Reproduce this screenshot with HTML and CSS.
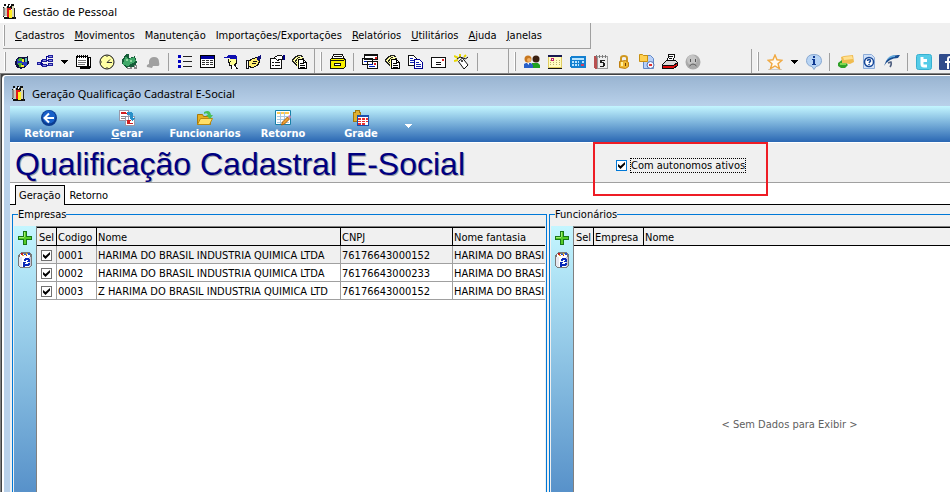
FILE: index.html
```html
<!DOCTYPE html>
<html lang="pt-BR">
<head>
<meta charset="utf-8">
<title>Gestão de Pessoal</title>
<link rel="stylesheet" href="styles.css">
</head>
<body>
<svg class="defs" aria-hidden="true">
  <symbol id="people" viewBox="0 0 16 16">
    <path fill="#111" d="M2 0h2v2H2zM6 0h2v2H6zM9 0h3v2H9zM1 3h1v10H1zM2 13h12v2H2zM5 2h7v3H5z"/>
    <path fill="#c8c8b4" d="M2 3h3v9H2z"/><path fill="#888" d="M1 4h2v8H1z"/>
    <path fill="#e01818" d="M5 4h4v9H5z"/><path fill="#ffee20" d="M7 6h3v8H7z"/>
    <path fill="#ddd8b0" d="M10 2h2v11h-2z"/><path fill="#222" d="M12 4h1v11h-1z"/>
    <path fill="#fff" d="M3 2h1v2H3zM7 1h1v2H7z"/>
  </symbol>
  <symbol id="arrow" viewBox="0 0 7 4"><path fill="currentColor" d="M0 0h7v1H6v1H5v1H4v1H3V3H2V2H1V1H0z"/></symbol>
  <symbol id="plus" viewBox="0 0 16 16">
    <path fill="#187818" d="M6 1h4v5h5v4h-5v5H6v-5H1V6h5z"/><path fill="#55cc28" d="M7 2h2v5h5v2H9v5H7V9H2V7h5z"/><path fill="#a0ee70" d="M7 2h1v5H2v1h5z"/>
  </symbol>
  <symbol id="bin" viewBox="0 0 16 16">
    <path fill="#777" d="M1 3l3-3h9l2 3v10l-3 3H3l-2-2z"/><path fill="#e8e8f0" d="M2 5h4v10H3l-1-1z"/><path fill="#fff" d="M5 5h7v10H5z"/><path fill="#c4c4d4" d="M12 5h2v8l-2 2z"/>
    <path fill="#fff" d="M3 2h10v3H3z"/><path fill="#c02020" d="M4 1h2v2H4zM9 3h1v1H9z"/><path fill="#2050d0" d="M7 2h2v1H7zM11 1h2v2h-2z"/><path fill="#e0b020" d="M9 1h1v2H9zM5 3h2v1H5z"/>
    <path fill="#0828b8" d="M8 6h4v1h1v3h-3V9h1V8H9v1H7V7h1zM6 10h3v1H8v1h3v-1h2v2h-1v1H8v1H6z"/>
  </symbol>
  <symbol id="docs" viewBox="0 0 16 16">
    <path fill="#ffffa0" d="M1 6l4-4 6 1v3H6v7L1 9z"/>
    <path fill="none" stroke="#222" d="M5 1.500h5M3 2.500h3M9 2.500h2M2 3.500h2M6 3.500h2M1 4.500h2M5 4.500h1M10 4.500h2M0 5.500h2M4 5.500h1M0 6.500h1M3 6.500h2M0 7.500h2M3 7.500h1M1 8.500h2M4 8.500h1M2 9.500h2M3 10.500h2M4 11.500h1"/>
    <path fill="#fff" stroke="#000" d="M6.500 5.500h5l3 3v6h-8z"/><path stroke="#000" d="M8 9.500h4M8 11.500h5M8 13.500h5"/><path fill="#000" d="M11 5h1v3h3v1h-4z"/>
  </symbol>
</svg>

<header class="titlebar">
  <svg class="icon"><use href="#people"/></svg>
  <h1>Gestão de Pessoal</h1>
</header>

<div class="menurow">
  <nav class="menubar" aria-label="Menu principal">
    <span class="grip"></span>
    <button><u>C</u>adastros</button>
    <button><u>M</u>ovimentos</button>
    <button>Ma<u>n</u>utenção</button>
    <button>Importações/Exportações</button>
    <button><u>R</u>elatórios</button>
    <button><u>U</u>tilitários</button>
    <button><u>A</u>juda</button>
    <button><u>J</u>anelas</button>
  </nav>
</div>

<div class="toolbars">
  <div class="tools tools-main" role="toolbar" aria-label="Cadastros">
    <span class="grip"></span>
    <button aria-label="Empresas"><svg class="icon" viewBox="0 0 16 16"><path fill="#101040" d="M4 3h7l3-1v3l1 4-3 4-5 2-5-2-1-5z"/><path fill="#2838c0" d="M3 5h6v5H3zM9 8h4v4H9z"/><path fill="#48b030" d="M5 4h3v3H4zM4 9h4v4H5z"/><path fill="#f4e430" d="M8 5h2v3H8zM7 11h3v2H7z"/><path fill="#60c0b0" d="M11 4h2v4h-2z"/></svg></button>
    <button aria-label="Organograma"><svg class="icon" viewBox="0 0 16 16"><path fill="#1c1c9c" d="M11 1h5v3h-5zM11 5h5v3h-5zM11 9h5v3h-5zM5 5h5v3H5zM0 8h4v3H0zM5 10h5v3H5z"/><path fill="#9090e0" d="M12 2h3v1h-3zM12 6h3v1h-3zM12 10h3v1h-3zM6 6h3v1H6zM1 9h2v1H1zM6 11h3v1H6z"/><path fill="none" stroke="#000090" d="M11 2.500H9.500V5M10 6.500h1M10 11.500h1M4 9.500h2M4.500 6v6"/></svg></button>
    <button class="drop" aria-label="Mais opções"><svg class="arrow"><use href="#arrow"/></svg></button>
    <button aria-label="Anotações"><svg class="icon" viewBox="0 0 16 16"><path fill="#000" d="M3 3h12v10l-2 2H4z"/><path fill="#fff" stroke="#000" d="M.5 2.500h11v10H.5z"/><path stroke="#777" fill="none" d="M2 6.500h8M2 8.500h8M2 10.500h7"/><path stroke="#fff" d="M13.500 4v8"/><path stroke="#000" stroke-dasharray="1 1" stroke-width="3" d="M1 2.500h11"/></svg></button>
    <button aria-label="Ponto"><svg class="icon smooth" viewBox="0 0 16 16"><circle cx="8" cy="8" r="7" fill="#ffffa4" stroke="#111"/><path d="M8 8.500h5M8 8.500l3-3M8 2v1M8 13v1M2 8h1" fill="none" stroke="#333"/></svg></button>
    <button aria-label="Pagamentos"><svg class="icon" viewBox="0 0 16 16"><path fill="#155c38" d="M0 6l4-6h3v4l6-2 2 6-2 5-9 1-4-4z"/><path fill="#40a868" d="M2 6l2-4 2 3 6-2 2 4-8 5-5-1z"/><path fill="#90d8a0" d="M4 5h2v2H4zM8 6h2v2H8z"/><path fill="#888" d="M12 11h3v4h-3zM5 13h5v2H5z"/><path fill="#fff" d="M13 12h1v1h-1zM6 13h2v1H6zM14 0h1v2h-1z"/></svg></button>
    <button aria-label="Segurança" disabled><svg class="icon smooth" viewBox="0 0 16 16"><path fill="#a0a0a0" d="M2 13q-1-2 2-3V7q1-4 5-4 5 0 5 5 1 4-1 4H8l-1 2z"/></svg></button>
    <span class="sep"></span>
    <button aria-label="Lista"><svg class="icon" viewBox="0 0 16 16"><path fill="#0000c0" d="M1 1h3v3H1zM1 6h3v3H1zM1 11h3v3H1z"/><path fill="#222" d="M6 2h9v1H6zM6 7h9v1H6zM6 12h9v1H6z"/></svg></button>
    <button aria-label="Tabela"><svg class="icon" viewBox="0 0 16 16"><path fill="#fff" stroke="#000" d="M.5 1.500h14v12H.5z"/><path fill="#0000a0" d="M1 2h13v3H1z"/><path stroke="#333" stroke-dasharray="3 1" d="M2 6.500h12M2 8.500h12M2 10.500h12"/></svg></button>
    <button aria-label="Funcionário"><svg class="icon" viewBox="0 0 16 16"><path fill="#1010b0" d="M5 1h7l2 2v3H7V4H1V3h3z"/><path fill="#ffff90" d="M5 5h8v3l-1 3H8L6 9z"/><path fill="#fff" d="M9 11h4l2 4H9z"/><path fill="none" stroke="#111" d="M5.500 5v3h1v3h2M13.500 6v3l-2 2 3 4M8.500 11v4M7 7.500h1"/></svg></button>
    <button aria-label="Contratos"><svg class="icon" viewBox="0 0 16 16"><path fill="#ffee70" stroke="#111" d="M2.500 7.500l4-3 6-1 1 4-2 4-5 2-4-1z"/><path fill="#10107c" d="M11 3l4-2v3l-2 3-2-1z"/><path fill="#fff" stroke="#111" d="M.5 6.500h2v8h-2z"/><path stroke="#111" fill="none" d="M7 7.500h4M6 9.500h4"/></svg></button>
    <button aria-label="Propriedades"><svg class="icon" viewBox="0 0 16 16"><path fill="#fff" stroke="#111" d="M1.500 4.500h11v10h-11z"/><path fill="none" stroke="#111" d="M3 8.500h2M6 8.500h5M3 11.500h2M6 11.500h5"/><path fill="#fff" stroke="#111" d="M5.500 3.500l3-2h4l1 1v3h-3l-2 1z"/><path fill="#000080" d="M14 1h2v5h-2z"/></svg></button>
    <button aria-label="Documentos"><svg class="icon"><use href="#docs"/></svg></button>
  </div>
  <div class="tools tools-files" role="toolbar" aria-label="Arquivos">
    <span class="grip"></span>
    <button aria-label="Arquivo"><svg class="icon" viewBox="0 0 16 16"><path fill="#fff" stroke="#111" d="M3.500.5h9l2 5h-13z"/><path stroke="#111" d="M4 2.500h8"/><path fill="#f8f000" stroke="#111" d="M.5 5.500l1-1h12l2 1v7l-2 2H.5z"/><path fill="#fff" stroke="#111" d="M4.500 9.500h6v2h-6z"/><path stroke="#111" d="M1 6.500h13"/></svg></button>
    <span class="sep"></span>
    <button aria-label="Formulários"><svg class="icon" viewBox="0 0 16 16"><path fill="#fff" stroke="#111" d="M2.500.5h13v5h-13zM.5 4.500h10v6H.5zM5.500 7.500h10v7h-10z"/><path fill="#111" d="M2 0h14v2H2zM0 4h11v1H0z"/><path fill="#e02020" d="M13 3h2v2h-2zM12 9h2v2h-2z"/><path stroke="#0020c0" d="M7 10.500h4M7 12.500h6M2 7.500h3"/></svg></button>
    <button aria-label="Relatórios"><svg class="icon"><use href="#docs"/></svg></button>
    <button aria-label="Copiar"><svg class="icon" viewBox="0 0 16 16"><path fill="#fff" stroke="#111" d="M.5 1.500h5l3 3v7h-8z"/><path stroke="#1020b0" d="M2 4.500h3M2 6.500h4M2 8.500h4"/><path fill="#fff" stroke="#000090" d="M6.500 5.500h5l3 3v6h-8z"/><path stroke="#1020b0" d="M8 8.500h3M8 10.500h5M8 12.500h5"/></svg></button>
    <button aria-label="Carta"><svg class="icon" viewBox="0 0 16 16"><path fill="#fff" stroke="#111" d="M.5 3.500h14v10H.5z"/><path fill="#e02020" d="M11 5h2v2h-2z"/><path stroke="#111" d="M5 8.500h5M5 10.500h5"/></svg></button>
    <button aria-label="Etiqueta"><svg class="icon smooth" viewBox="0 0 16 16"><path fill="#fff" stroke="#111" d="M4.500 7.500l4-3.500 5.500 7-4 4z"/><path stroke="#e8d800" stroke-width="2" d="M0 2l4 2M0 7l4-1M6 0v3M12 1l-2 2"/><path stroke="#111" fill="none" d="M3 5l3-2 3 1q3 2 5-1"/><circle cx="8" cy="7" r="1" fill="#111"/></svg></button>
    <span class="sep"></span>
  </div>
  <div class="tools tools-apps" role="toolbar" aria-label="Aplicativos">
    <span class="grip"></span>
    <button aria-label="Usuários"><svg class="icon smooth" viewBox="0 0 16 16"><circle cx="12" cy="5" r="3.500" fill="#3a2010"/><path fill="#20a020" d="M8 14V9h6l2 2v3z"/><circle cx="4" cy="5" r="3.500" fill="#c87820"/><circle cx="5" cy="6" r="2" fill="#f4b060"/><path fill="#2860c8" d="M0 14V10l2-1h5l2 2v3z"/><path fill="#fff" d="M3 9h2v2z"/></svg></button>
    <button aria-label="Agenda"><svg class="icon" viewBox="0 0 16 16"><path fill="#fffbc0" stroke="#e0cc60" d="M1.500 1.500h13v12h-13z"/><path fill="#181850" d="M1 1h14v2H1z"/><path stroke="#b8b070" stroke-dasharray="1 2" d="M3 6.500h11M3 8.500h11M3 10.500h11"/><path fill="#c02070" d="M4 4h3v3H4z"/><path fill="#fff" d="M5 5h1v1H5z"/><path fill="#111" d="M1 14h14v1H1z"/></svg></button>
    <button aria-label="Calculadora"><svg class="icon" viewBox="0 0 16 16"><path fill="#1480d0" d="M0 3l1-1h14l1 1v10l-1 1H1l-1-1z"/><path fill="#b8e4ff" d="M2 4h12v2H2z"/><path stroke="#b8e4ff" stroke-width="2" stroke-dasharray="2 1" d="M2 8h7M2 11h7M12 8h3"/><path fill="#d04060" d="M11 10h3v2h-3z"/></svg></button>
    <button aria-label="Calendário"><svg class="icon" viewBox="0 0 16 16"><path fill="#b85050" d="M1 2h3v13H2l-1-2z"/><path fill="#eee" stroke="#999" d="M4.500 2.500h10v12h-10z"/><path stroke="#777" stroke-width="3" stroke-dasharray="1 2" d="M3 2.500h11"/><path fill="#222" d="M7 6h5v1H9v1h2v1h1v3h-1v1H7v-1h3V9H7z"/></svg></button>
    <button aria-label="Bloqueio"><svg class="icon smooth" viewBox="0 0 16 16"><path fill="none" stroke="#d09820" stroke-width="2" d="M5 8V4q0-2 3-2t3 2v4"/><path fill="#f0b830" stroke="#c08010" d="M3.500 7.500l6-1 3 2v4l-3 2-6-1z"/><path fill="#fff0a0" d="M5 8h2v4H5z"/><path fill="#704008" d="M9 9h1v3H9z"/></svg></button>
    <button aria-label="Histórico"><svg class="icon smooth" viewBox="0 0 16 16"><path fill="#b8d0f8" stroke="#6088c8" d="M4.500 1.500h7l3 3v10h-10z"/><path fill="#ffd050" stroke="#c89010" d="M.5.500h3l1 1h4v6h-8z"/><circle cx="11.500" cy="11" r="3.500" fill="#f4f8ff" stroke="#5070b0"/><path fill="#e03030" d="M10 10h3v2h-3z"/></svg></button>
    <button aria-label="Imprimir"><svg class="icon" viewBox="0 0 16 16"><path fill="#fff" stroke="#111" d="M5.500 7.500l1-7h6l-1 7z"/><path fill="#ddd" stroke="#111" d="M.5 10.500l4-4h9l2 2-3 3H.5z"/><path fill="#e01010" stroke="#111" d="M.5 11.500h11l4-3v3l-4 3H.5z"/><path stroke="#111" d="M7 2.500h4M7 4.500h3"/></svg></button>
    <button aria-label="Demissão"><svg class="icon smooth" viewBox="0 0 16 16"><circle cx="8" cy="8" r="7.500" fill="#aaa"/><circle cx="7" cy="6" r="5" fill="#c4c4c4"/><path fill="#555" d="M5 5h1v3H5zM10 5h1v3h-1z"/><path fill="none" stroke="#555" d="M4.500 12q3.500-4 7 0"/></svg></button>
  </div>
  <div class="tools tools-links" role="toolbar" aria-label="Atalhos">
    <span class="grip"></span>
    <button aria-label="Favoritos"><svg class="icon smooth" viewBox="0 0 16 16"><path fill="#ccc" d="M1 15h14v1H1z"/><path fill="#fffaf0" stroke="#f0a840" stroke-width="1.400" d="M8 1l2 4.800 5 .5-4 3.400 1.500 5L8 12l-4.500 2.700L5 9.700 1 6.300l5-.5z"/></svg></button>
    <button class="drop" aria-label="Mais favoritos"><svg class="arrow"><use href="#arrow"/></svg></button>
    <button aria-label="Informações"><svg class="icon smooth" viewBox="0 0 16 16"><path fill="#b8d4f4" stroke="#88a8d0" d="M8 .5q7 0 7.500 6 0 5-5.500 6l-2 3-2-3Q.5 11.500.5 6.500 1 .5 8 .5z"/><path fill="#103890" d="M7 2h2v2H7zM6 5h3v5h1v1H6v-1h1V6H6z"/></svg></button>
    <span class="sep"></span>
    <button aria-label="Chat"><svg class="icon smooth" viewBox="0 0 16 16"><path fill="#f0bc50" d="M3 3l3-1 9-1 1 7-4 2-8-1z"/><path fill="#ffe090" d="M5 3l9-1 1 3-9 1z"/><path fill="#30a028" d="M0 9l4-3v3h4l2 2-3 3H3l-3-2z"/><path fill="#80d850" d="M2 9h6v2H2z"/></svg></button>
    <button aria-label="Ajuda"><svg class="icon smooth" viewBox="0 0 16 16"><path fill="#d0e0f8" stroke="#8cacd8" d="M2.500.5h8l3 3v11h-11z"/><circle cx="8" cy="8" r="4.500" fill="#fff" stroke="#184898" stroke-width="1.500"/><path fill="none" stroke="#184898" stroke-width="1.500" d="M6.500 7q0-1.500 1.500-1.500t1.500 1.500L8 9M8 10v1"/></svg></button>
    <button aria-label="Site"><svg class="icon smooth" viewBox="0 0 16 16"><path fill="#184c90" d="M16 1Q3 0 0 12 5 4 14 4z"/><path fill="#60a8dc" d="M11 1Q5 1 2 7q4-4 9-4z"/><path fill="none" stroke="#506080" stroke-width="1.500" d="M4 9l3-1q1 2-1 5"/></svg></button>
    <span class="sep"></span>
    <button aria-label="Twitter"><svg class="icon smooth" viewBox="0 0 16 16"><rect x=".5" y=".5" width="15" height="15" rx="2" fill="#55cce8" stroke="#38b0d0"/><path fill="none" stroke="#fff" stroke-width="3" d="M6 3v7q0 2 2 2h3M6 6.500h5"/></svg></button>
    <button aria-label="Facebook"><svg class="icon smooth" viewBox="0 0 16 16"><rect width="16" height="16" rx="1" fill="#304c8c"/><path fill="none" stroke="#fff" stroke-width="2" d="M13 3h-2q-2 0-2 2v10M6 8h7"/></svg></button>
  </div>
</div>

<main class="workspace">
  <section class="window">
    <header class="window-title">
      <svg class="icon"><use href="#people"/></svg>
      <h2>Geração Qualificação Cadastral E-Social</h2>
    </header>

    <div class="actions" role="toolbar" aria-label="Ações">
      <button class="action"><svg class="icon smooth" viewBox="0 0 16 16"><circle cx="8" cy="8" r="8" fill="#0c3c90"/><circle cx="8" cy="7" r="6.500" fill="#1860c8"/><path fill="none" stroke="#fff" stroke-width="2" d="M13 8H4M8 3.500L3.500 8 8 12.500"/></svg><span>Retornar</span></button>
      <button class="action"><svg class="icon" viewBox="0 0 16 16"><path fill="#fff" stroke="#99a" d="M.5.500h9v10h-9zM6.500 6.500h9v9h-9z"/><path stroke="#d02020" d="M2 3.500h6M8 10.500h4M8 13.500h6"/><path fill="#d02020" d="M2 2h5v1H2zM8 11h3v3H8z"/><path stroke="#888" d="M2 6.500h5M2 8.500h4"/><path fill="#2890c8" d="M8 2h4l2 2v4h2l-3 3-3-3h1V5H8z"/></svg><span><u>G</u>erar</span></button>
      <button class="action"><svg class="icon smooth" viewBox="0 0 16 16"><path fill="#e8b020" stroke="#a87808" d="M.5 14.500v-10h5l1 2h7v8z"/><path fill="#ffe068" stroke="#b88810" d="M.5 14.500l3-6h12l-3 6z"/><path fill="#48c058" d="M7 2q6-3 7 3h2l-3 4-4-4h2Q10 2 7 4z"/></svg><span>Funcionarios</span></button>
      <button class="action"><svg class="icon smooth" viewBox="0 0 16 16"><path fill="#fff" stroke="#1880a8" d="M.5.500h15v14H.5z"/><path fill="#ffcc50" d="M2 2h12v2H2z"/><path fill="none" stroke="#a8c8e0" d="M2 6.500h12M2 9.500h12M2 12.500h12M5.500 2v12M9.500 2v12"/><path fill="#f0a030" stroke="#a86010" d="M6.500 15l1-3 5-5 2 2-5 5z"/><path fill="#d880b0" d="M13 6l2-1 1 2-1 2z"/></svg><span>Retorno</span></button>
      <button class="action"><svg class="icon" viewBox="0 0 16 16"><path fill="#e0b030" stroke="#a07810" d="M.5 2.500h2v-2h4v2h1v9h-7z"/><path fill="#fff" stroke="#1850b0" d="M4.500 5.500h11v10h-11z"/><path fill="#1850b0" d="M4 5h12v2H4z"/><path fill="#e83030" d="M5 8h3v2H5zM9 8h3v2H9zM13 8h2v2h-2zM5 11h3v1H5zM9 11h3v1H9zM13 11h2v1h-2zM5 13h3v2H5zM9 13h3v2H9z"/></svg><span>Grade</span></button>
      <button class="more" aria-label="Mais ações"><svg class="arrow"><use href="#arrow"/></svg></button>
    </div>

    <div class="banner">
      <h3>Qualificação Cadastral E-Social</h3>
      <label class="option"><input type="checkbox" checked><span>Com autonomos ativos</span></label>
      <span class="highlight"></span>
    </div>

    <div class="tabs" role="tablist">
      <button role="tab" aria-selected="true">Geração</button>
      <button role="tab" aria-selected="false">Retorno</button>
    </div>

    <div class="panels">
      <fieldset class="group">
        <legend>Empresas</legend>
        <div class="side">
          <button aria-label="Marcar todos"><svg class="icon"><use href="#plus"/></svg></button>
          <button aria-label="Desmarcar todos"><svg class="icon"><use href="#bin"/></svg></button>
        </div>
        <div class="grid">
          <table class="companies">
            <colgroup><col class="c-sel"><col class="c-code"><col class="c-name"><col class="c-cnpj"><col></colgroup>
            <thead><tr><th>Sel</th><th>Codigo</th><th>Nome</th><th>CNPJ</th><th>Nome fantasia</th></tr></thead>
            <tbody>
              <tr class="current"><td><input type="checkbox" checked aria-label="Selecionar 0001"></td><td>0001</td><td>HARIMA DO BRASIL INDUSTRIA QUIMICA LTDA</td><td>76176643000152</td><td>HARIMA DO BRASI</td></tr>
              <tr><td><input type="checkbox" checked aria-label="Selecionar 0002"></td><td>0002</td><td>HARIMA DO BRASIL INDUSTRIA QUIMICA LTDA</td><td>76176643000233</td><td>HARIMA DO BRASI</td></tr>
              <tr><td><input type="checkbox" checked aria-label="Selecionar 0003"></td><td>0003</td><td>Z HARIMA DO BRASIL INDUSTRIA QUIMICA LTD</td><td>76176643000152</td><td>HARIMA DO BRASI</td></tr>
            </tbody>
          </table>
        </div>
      </fieldset>
      <fieldset class="group">
        <legend>Funcionários</legend>
        <div class="side">
          <button aria-label="Marcar todos"><svg class="icon"><use href="#plus"/></svg></button>
          <button aria-label="Desmarcar todos"><svg class="icon"><use href="#bin"/></svg></button>
        </div>
        <div class="grid">
          <table class="staff">
            <colgroup><col class="c-sel"><col class="c-company"><col></colgroup>
            <thead><tr><th>Sel</th><th>Empresa</th><th>Nome</th></tr></thead>
          </table>
          <p class="empty">&lt; Sem Dados para Exibir &gt;</p>
        </div>
      </fieldset>
    </div>
  </section>
</main>
</body>
</html>
```
FILE: styles.css
```css
* { box-sizing: border-box; }

body {
  margin: 0;
  height: 100vh;
  display: flex;
  flex-direction: column;
  overflow: hidden;
  background: #fff;
  color: #000;
  font: 11px/14px "DejaVu Sans Condensed", Tahoma, sans-serif;
}

button {
  border: 0;
  padding: 0;
  background: none;
  color: inherit;
  font: inherit;
  white-space: nowrap;
}

h1, h2, h3, p { margin: 0; font-weight: normal; }

svg { display: block; flex: none; }
.defs { position: absolute; width: 0; height: 0; }
.icon { width: 16px; height: 16px; shape-rendering: crispEdges; }
.icon.smooth { shape-rendering: auto; }
.arrow { width: 7px; height: 4px; shape-rendering: crispEdges; }

.titlebar {
  display: flex;
  align-items: center;
  gap: 5px;
  height: 23px;
  padding-left: 2px;
}
.titlebar h1, .window-title h2 { font: 11px/16px "Noto Sans", sans-serif; }

.menurow { background: #f0f0f0; padding-left: 3px; }
.menubar {
  display: flex;
  align-items: center;
  gap: 10px;
  width: 588px;
  height: 26px;
  border-right: 1px solid #a0a0a0;
  border-bottom: 1px solid #a0a0a0;
}
.grip {
  width: 2px;
  align-self: stretch;
  margin: 2px 0;
  background: #fff;
  border-right: 1px solid #a0a0a0;
}

.toolbars {
  display: flex;
  height: 25px;
  background: #f0f0f0;
  border-bottom: 1px solid #808080;
}
.tools {
  display: flex;
  flex: none;
  align-items: center;
  padding: 1px 0 0 4px;
  border-right: 1px solid #a0a0a0;
}
.tools .grip { margin-right: 4px; }
.tools button {
  display: flex;
  justify-content: center;
  flex: none;
  width: 23px;
}
.tools .drop { width: 16px; }
.sep { flex: none; width: 1px; height: 18px; margin: 0 4px; background: #a0a0a0; }
.tools-main { width: 315px; }
.tools-files { width: 194px; padding-left: 5px; }
.tools-apps { width: 243px; padding-left: 5px; }
.tools-links { padding-left: 5px; border-right: 0; }

.workspace {
  flex: 1;
  display: flex;
  min-height: 0;
  overflow: hidden;
  padding: 1px 0 0 2px;
  background: linear-gradient(90deg, #808080 1px, #404040 1px);
}
/* The child window is larger than the work area and runs past its edges. */
.window {
  flex: 1;
  display: flex;
  flex-direction: column;
  min-width: 0;
  margin: 0 -57px -112px 0;
  padding-left: 6px;
  border-left: 2px solid #fff;
  border-top: 1px solid #fff;
  border-top-left-radius: 4px;
  background: #b9d1ea;
}
.window-title {
  display: flex;
  align-items: center;
  gap: 5px;
  height: 30px;
  margin-left: -6px;
  padding: 6px 0 0 7px;
  border-top-left-radius: 3px;
  background: linear-gradient(#99b4d1, #b9d1ea);
}

.actions {
  display: flex;
  height: 36px;
  background: linear-gradient(#c4f6ff, #2a67b3);
  color: #fff;
}
.action {
  display: flex;
  flex-direction: column;
  align-items: center;
  gap: 1px;
  width: 78px;
  padding-top: 4px;
  font-weight: bold;
}
.more { padding: 4px 0 0 5px; }

.banner {
  position: relative;
  display: flex;
  align-items: center;
  height: 41px;
  background: #f0f0f0;
  border-top: 1px solid #fff;
  border-bottom: 1px solid #a0a0a0;
}
.banner h3 {
  width: 606px;
  padding: 2px 0 0 5px;
  color: #000080;
  font: 32px/38px "Liberation Sans", Arial, sans-serif;
  text-shadow: 1px 1px 0 #a0a0a0;
  white-space: nowrap;
}
.option { display: flex; align-items: center; gap: 4px; margin-top: 5px; }
.option span { outline: 1px dotted #000; line-height: 13px; white-space: nowrap; }
.highlight {
  position: absolute;
  left: 583px;
  top: -1px;
  z-index: 1;
  width: 175px;
  height: 54px;
  border: 2px solid #ee1c25;
  pointer-events: none;
}

input[type="checkbox"] {
  appearance: none;
  flex: none;
  display: block;
  width: 11px;
  height: 11px;
  margin: 0;
  border: 1px solid #707070;
  background: #fff;
}
input[type="checkbox"]:checked {
  background: #fff url("data:image/svg+xml,%3Csvg xmlns='http://www.w3.org/2000/svg' viewBox='0 0 9 9'%3E%3Cpath d='M1 3l2.500 2L8 1v2.500L3.500 8 1 5.500z'/%3E%3C/svg%3E") center / 9px 9px;
}
.option input[type="checkbox"] { border-color: #0078d7; }
.companies input[type="checkbox"] { margin: 0 auto; }

.tabs {
  display: flex;
  height: 22px;
  padding: 2px 0 0 5px;
  background: #fff;
  box-shadow: inset 0 -1px #000;
}
.tabs button { padding: 2px 4px 0; }
.tabs button[aria-selected="true"] {
  padding: 0 4px 0 3px;
  background: #f0f0f0;
  border: 1px solid #000;
  border-bottom: 0;
}

.panels {
  flex: 1;
  display: grid;
  grid-template-columns: 535px 1fr;
  gap: 2px;
  min-height: 0;
  padding: 3px 0 0 2px;
  background: #f0f0f0;
}
.group {
  display: flex;
  min-width: 0;
  margin: 0;
  padding: 5px 1px 0;
  border: 1px solid #0078d7;
  border-bottom: 0;
}
.group legend { margin-left: 4px; padding: 0; line-height: 13px; }
.side {
  display: flex;
  flex-direction: column;
  align-items: center;
  gap: 6px;
  width: 22px;
  padding-top: 4px;
  background: linear-gradient(#c4f6ff, #2a67b3);
}
.grid {
  flex: 1;
  display: flex;
  flex-direction: column;
  min-width: 0;
  overflow: hidden;
  background: #fff;
  border-left: 1px solid #808080;
  border-top: 1px solid #808080;
}
table {
  width: 100%;
  table-layout: fixed;
  border-collapse: separate;
  border-spacing: 0;
}
th, td {
  height: 18px;
  padding: 2px 1px 0;
  overflow: hidden;
  border-right: 1px solid #a0a0a0;
  border-bottom: 1px solid #a0a0a0;
  font-weight: normal;
  text-align: left;
  white-space: nowrap;
}
th { height: 19px; background: #f0f0f0; border-color: #000; border-top: 1px solid #000; }
th:first-child { text-align: center; }
th:last-child, td:last-child { border-right: 0; }
.current td { background: #f0f0f0; }
.c-sel { width: 20px; }
.c-code { width: 40px; }
.c-name { width: 244px; }
.c-cnpj { width: 112px; }
.c-company { width: 50px; }
.empty { margin: auto; color: #606060; }
```
